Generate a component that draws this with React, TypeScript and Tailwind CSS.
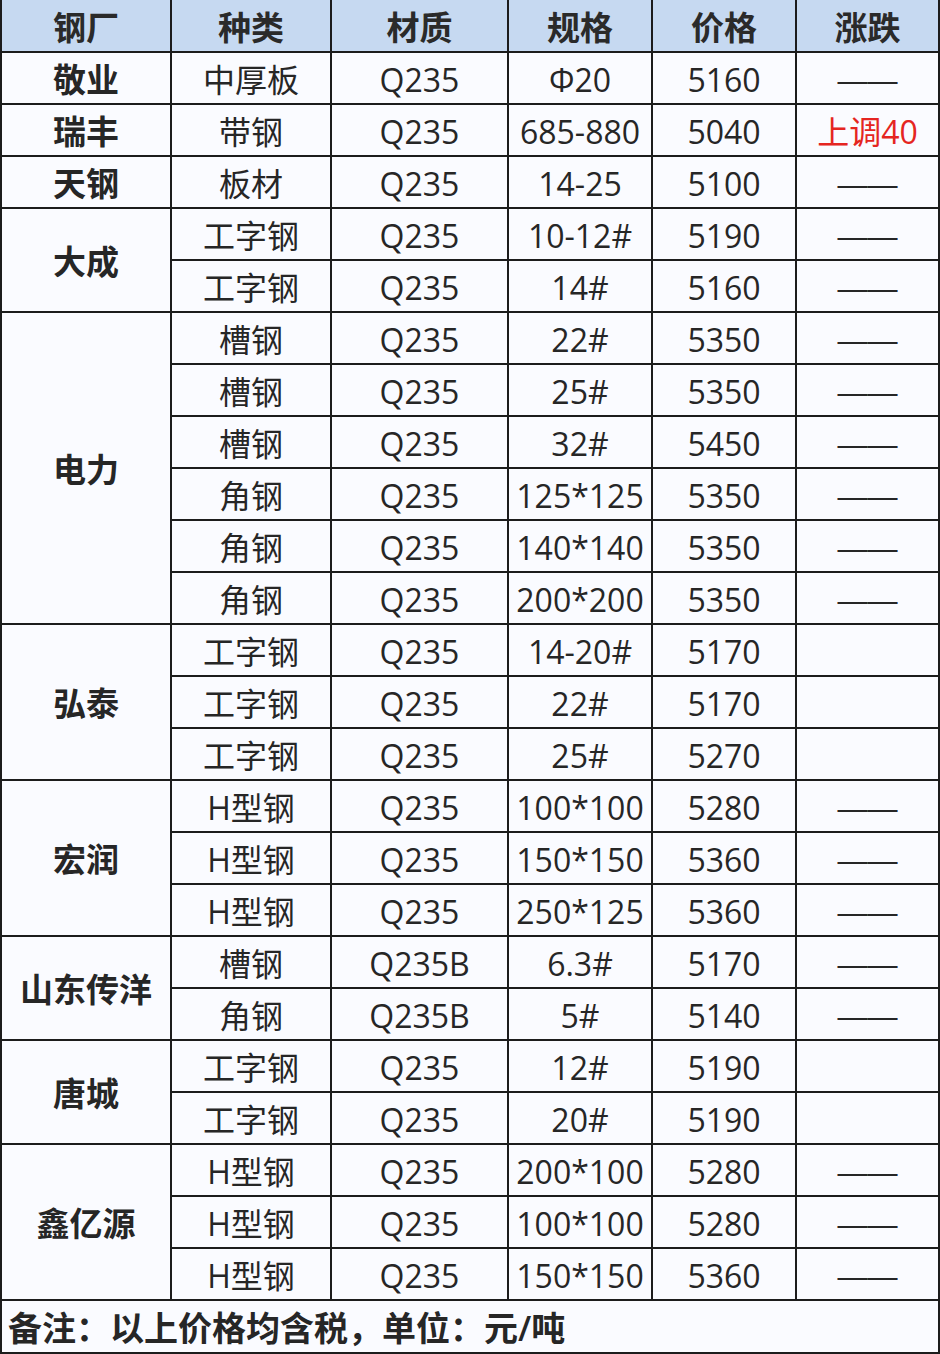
const rows: { mill: string; span: number; items: [string, string, string, string, string][] }[] = [
  { mill: "敬业", span: 1, items: [["中厚板", "Q235", "Φ20", "5160", "——"]] },
  { mill: "瑞丰", span: 1, items: [["带钢", "Q235", "685-880", "5040", "上调40"]] },
  { mill: "天钢", span: 1, items: [["板材", "Q235", "14-25", "5100", "——"]] },
  {
    mill: "大成",
    span: 2,
    items: [
      ["工字钢", "Q235", "10-12#", "5190", "——"],
      ["工字钢", "Q235", "14#", "5160", "——"],
    ],
  },
  {
    mill: "电力",
    span: 6,
    items: [
      ["槽钢", "Q235", "22#", "5350", "——"],
      ["槽钢", "Q235", "25#", "5350", "——"],
      ["槽钢", "Q235", "32#", "5450", "——"],
      ["角钢", "Q235", "125*125", "5350", "——"],
      ["角钢", "Q235", "140*140", "5350", "——"],
      ["角钢", "Q235", "200*200", "5350", "——"],
    ],
  },
  {
    mill: "弘泰",
    span: 3,
    items: [
      ["工字钢", "Q235", "14-20#", "5170", ""],
      ["工字钢", "Q235", "22#", "5170", ""],
      ["工字钢", "Q235", "25#", "5270", ""],
    ],
  },
  {
    mill: "宏润",
    span: 3,
    items: [
      ["H型钢", "Q235", "100*100", "5280", "——"],
      ["H型钢", "Q235", "150*150", "5360", "——"],
      ["H型钢", "Q235", "250*125", "5360", "——"],
    ],
  },
  {
    mill: "山东传洋",
    span: 2,
    items: [
      ["槽钢", "Q235B", "6.3#", "5170", "——"],
      ["角钢", "Q235B", "5#", "5140", "——"],
    ],
  },
  {
    mill: "唐城",
    span: 2,
    items: [
      ["工字钢", "Q235", "12#", "5190", ""],
      ["工字钢", "Q235", "20#", "5190", ""],
    ],
  },
  {
    mill: "鑫亿源",
    span: 3,
    items: [
      ["H型钢", "Q235", "200*100", "5280", "——"],
      ["H型钢", "Q235", "100*100", "5280", "——"],
      ["H型钢", "Q235", "150*150", "5360", "——"],
    ],
  },
];

const font = { fontFamily: '"Open Sans", "Noto Sans CJK SC", sans-serif' };

const cell = "border-2 border-[#1c1c1c] text-center align-middle p-0 pt-[3px] h-[52px] whitespace-nowrap";

function Change({ v }: { v: string }) {
  if (v.startsWith("上")) return <span className="text-[#e52521]">{v}</span>;
  if (v === "——")
    return <span className="text-[30px]" style={{ fontFamily: '"Liberation Sans", sans-serif' }}>{v}</span>;
  return null;
}

export default function App() {
  return (
    <div className="w-[940px] h-[1354px] bg-[#fafbff] text-[#262626] overflow-hidden" style={font}>
      <table className="w-[938px] border-collapse table-fixed text-[32px] leading-none">
        <colgroup>
          <col className="w-[170px]" />
          <col className="w-[160px]" />
          <col className="w-[177px]" />
          <col className="w-[144px]" />
          <col className="w-[144px]" />
          <col className="w-[143px]" />
        </colgroup>
        <thead>
          <tr className="bg-[#c6d9f1]">
            {["钢厂", "种类", "材质", "规格", "价格", "涨跌"].map((h) => (
              <th key={h} className={`${cell} border-t-0 font-semibold text-[33px] text-[#2a2a2a]`}>
                {h}
              </th>
            ))}
          </tr>
        </thead>
        <tbody>
          {rows.map((g) =>
            g.items.map((it, i) => (
              <tr key={g.mill + i}>
                {i === 0 && (
                  <td rowSpan={g.span} className={`${cell} font-semibold text-[33px]`}>
                    {g.mill}
                  </td>
                )}
                <td className={cell}>{it[0]}</td>
                <td className={cell}>{it[1]}</td>
                <td className={cell}>{it[2]}</td>
                <td className={cell}>{it[3]}</td>
                <td className={cell}>
                  <Change v={it[4]} />
                </td>
              </tr>
            ))
          )}
          <tr>
            <td colSpan={6} className={`${cell} h-[53px] text-left pl-[6px] font-semibold text-[34px]`}>
              备注：以上价格均含税，单位：元/吨
            </td>
          </tr>
        </tbody>
      </table>
    </div>
  );
}
